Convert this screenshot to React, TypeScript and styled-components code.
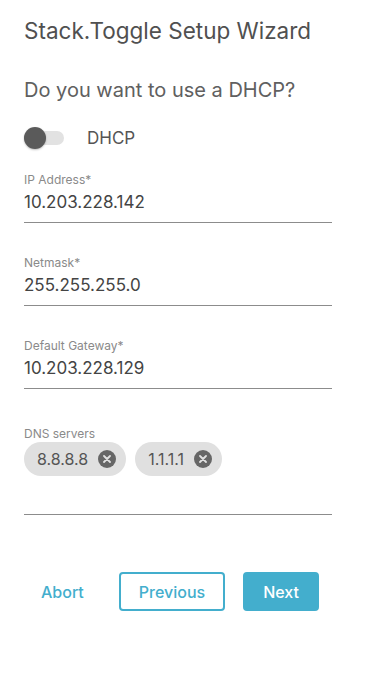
import React from 'react'
import styled, { createGlobalStyle } from 'styled-components'

const GlobalStyle = createGlobalStyle`
  html, body {
    margin: 0;
    padding: 0;
    background: #fff;
  }
  body {
    font-family: Inter, "Noto Sans", sans-serif;
  }
`

const Wizard = styled.div`
  width: 369px;
  min-height: 691px;
  box-sizing: border-box;
  padding: 18px 37px 0 24px;
  display: flex;
  flex-direction: column;
`

const Title = styled.h1`
  margin: 0;
  font-size: 22.5px;
  line-height: 26px;
  font-weight: 400;
  color: #505050;
`

const Question = styled.h2`
  margin: 34px 0 0;
  font-size: 20px;
  line-height: 24px;
  font-weight: 400;
  color: #606060;
`

const ToggleRow = styled.label`
  margin-top: 25px;
  display: flex;
  align-items: center;
  gap: 23px;
  height: 22px;
`

const Track = styled.span`
  position: relative;
  width: 40px;
  height: 14px;
  border-radius: 7px;
  background: #e2e2e2;
`

const Thumb = styled.span<{ $on: boolean }>`
  position: absolute;
  top: -4px;
  left: ${p => (p.$on ? '19px' : '0')};
  width: 22px;
  height: 22px;
  border-radius: 50%;
  background: #5a5a5a;
  box-shadow: 0 1px 2px rgba(0, 0, 0, 0.25);
`

const ToggleLabel = styled.span`
  font-size: 17px;
  color: #555;
`

const Field = styled.div<{ $gap?: number }>`
  margin-top: ${p => p.$gap ?? 33}px;
  padding-bottom: 9px;
  border-bottom: 1px solid #8c8c8c;
  display: flex;
  flex-direction: column;
`

const FieldLabel = styled.span`
  font-size: 12px;
  line-height: 14px;
  color: #8a8a8a;
`

const FieldValue = styled.span`
  margin-top: 4px;
  font-size: 17px;
  line-height: 22px;
  color: #444;
`

const Chips = styled.div`
  margin-top: 1px;
  margin-bottom: 29px;
  display: flex;
  gap: 9px;
`

const Chip = styled.span`
  display: inline-flex;
  align-items: center;
  gap: 10px;
  height: 34px;
  padding: 0 10px 0 13px;
  border-radius: 17px;
  background: #e0e0e0;
  font-size: 16px;
  color: #555;
`

const ChipClose = styled.span`
  width: 18px;
  height: 18px;
  border-radius: 50%;
  background: #666;
  display: inline-flex;
  align-items: center;
  justify-content: center;
`

const Actions = styled.div`
  margin-top: 57px;
  display: flex;
  align-items: center;
  gap: 18px;
`

const Button = styled.button<{ $variant: 'text' | 'outline' | 'solid' }>`
  height: 39px;
  padding: 0 ${p => (p.$variant === 'text' ? 15 : 18)}px;
  box-sizing: border-box;
  border-radius: 4px;
  font-family: Inter, "Noto Sans", sans-serif;
  font-size: 16px;
  font-weight: 500;
  cursor: pointer;
  border: 2px solid ${p => (p.$variant === 'text' ? 'transparent' : '#43aecd')};
  background: ${p => (p.$variant === 'solid' ? '#43aecd' : '#fff')};
  color: ${p => (p.$variant === 'solid' ? '#fff' : '#43aecd')};
`

const CloseIcon = () => (
  <svg width="8" height="8" viewBox="0 0 8 8">
    <path d="M1 1L7 7M7 1L1 7" stroke="#e0e0e0" strokeWidth="1.8" strokeLinecap="round" />
  </svg>
)

const fields = [
  { label: 'IP Address*', value: '10.203.228.142' },
  { label: 'Netmask*', value: '255.255.255.0' },
  { label: 'Default Gateway*', value: '10.203.228.129' },
]

const dnsServers = ['8.8.8.8', '1.1.1.1']

const App = () => {
  return (
    <>
      <GlobalStyle />
      <Wizard>
        <Title>Stack.Toggle Setup Wizard</Title>
        <Question>Do you want to use a DHCP?</Question>
        <ToggleRow>
          <Track>
            <Thumb $on={false} />
          </Track>
          <ToggleLabel>DHCP</ToggleLabel>
        </ToggleRow>

        {fields.map((f, i) => (
          <Field key={f.label} $gap={i === 0 ? 24 : 33}>
            <FieldLabel>{f.label}</FieldLabel>
            <FieldValue>{f.value}</FieldValue>
          </Field>
        ))}

        <Field $gap={38}>
          <FieldLabel>DNS servers</FieldLabel>
          <Chips>
            {dnsServers.map(s => (
              <Chip key={s}>
                {s}
                <ChipClose>
                  <CloseIcon />
                </ChipClose>
              </Chip>
            ))}
          </Chips>
        </Field>

        <Actions>
          <Button $variant="text">Abort</Button>
          <Button $variant="outline">Previous</Button>
          <Button $variant="solid">Next</Button>
        </Actions>
      </Wizard>
    </>
  )
}

export default App
